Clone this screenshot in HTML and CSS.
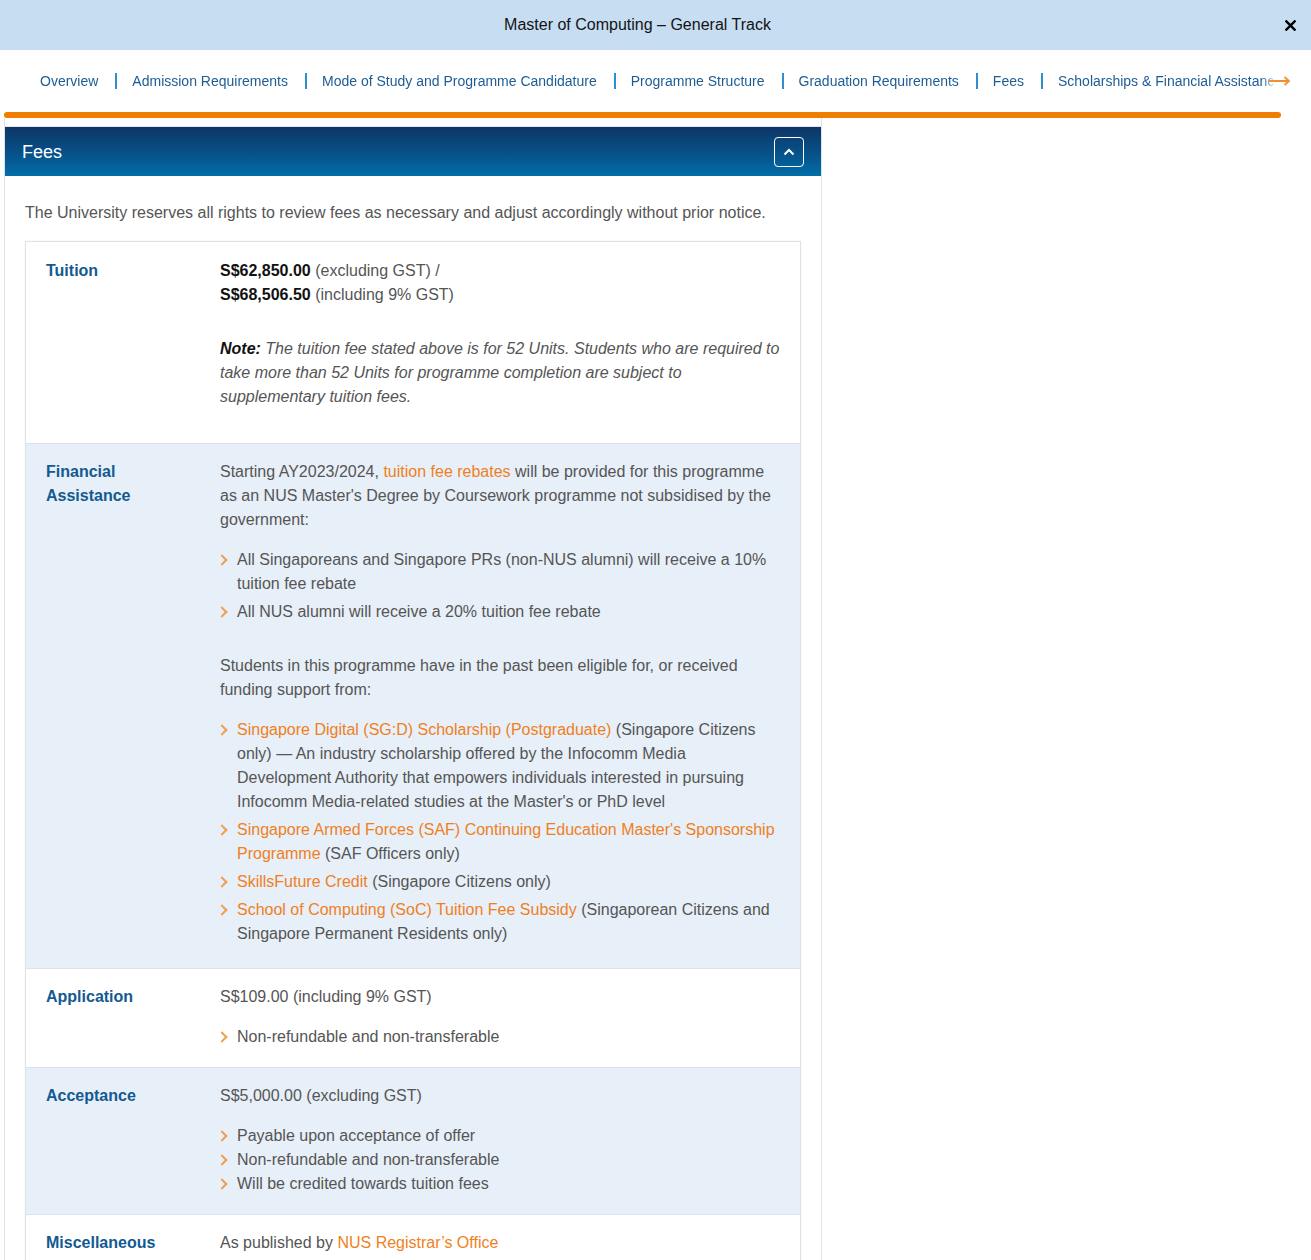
FILE: index.html
```html
<!DOCTYPE html>
<html lang="en">
<head>
<meta charset="utf-8">
<title>Master of Computing – General Track</title>
<link rel="stylesheet" href="styles.css">
</head>
<body>
<header class="topbar">
  <div class="topbar-title">Master of Computing – General Track</div>
  <button class="close-btn" aria-label="Close">
    <svg width="11" height="11" viewBox="0 0 12 12"><path d="M1.5 1.5 L10.5 10.5 M10.5 1.5 L1.5 10.5" stroke="#000" stroke-width="2.6" stroke-linecap="square"/></svg>
  </button>
</header>

<div class="page">
  <nav class="tabs">
    <div class="tabs-track">
      <a class="tab">Overview</a><span class="sep"></span>
      <a class="tab">Admission Requirements</a><span class="sep"></span>
      <a class="tab">Mode of Study and Programme Candidature</a><span class="sep"></span>
      <a class="tab">Programme Structure</a><span class="sep"></span>
      <a class="tab">Graduation Requirements</a><span class="sep"></span>
      <a class="tab">Fees</a><span class="sep"></span>
      <a class="tab">Scholarships &amp; Financial Assistance</a>
    </div>
    <span class="tabs-arrow">
      <svg width="22" height="10" viewBox="0 0 22 10"><path d="M0 5 H20 M15.5 1 L20 5 L15.5 9" fill="none" stroke="#f0902e" stroke-width="1.8"/></svg>
    </span>
  </nav>
  <div class="progress"></div>

  <section class="panel">
    <div class="panel-head">
      <h2 class="panel-title">Fees</h2>
      <button class="toggle" aria-label="Collapse">
        <svg width="12" height="8" viewBox="0 0 12 8"><path d="M1.5 6.5 L6 2 L10.5 6.5" fill="none" stroke="#fff" stroke-width="2"/></svg>
      </button>
    </div>
    <div class="panel-body">
      <p class="intro">The University reserves all rights to review fees as necessary and adjust accordingly without prior notice.</p>

      <div class="fees">
        <div class="row">
          <div class="label">Tuition</div>
          <div class="content">
            <p class="prices"><b>S$62,850.00</b> (excluding GST) /<br><b>S$68,506.50</b> (including 9% GST)</p>
            <p class="note"><b>Note:</b> The tuition fee stated above is for 52 Units. Students who are required to take more than 52 Units for programme completion are subject to supplementary tuition fees.</p>
          </div>
        </div>

        <div class="row alt">
          <div class="label">Financial Assistance</div>
          <div class="content">
            <p class="para">Starting AY2023/2024, <a class="link">tuition fee rebates</a> will be provided for this programme as an NUS Master's Degree by Coursework programme not subsidised by the government:</p>
            <ul class="list spaced gap-after">
              <li>All Singaporeans and Singapore PRs (non-NUS alumni) will receive a 10% tuition fee rebate</li>
              <li>All NUS alumni will receive a 20% tuition fee rebate</li>
            </ul>
            <p class="para">Students in this programme have in the past been eligible for, or received funding support from:</p>
            <ul class="list spaced">
              <li><a class="link">Singapore Digital (SG:D) Scholarship (Postgraduate)</a> (Singapore Citizens only) — An industry scholarship offered by the Infocomm Media Development Authority that empowers individuals interested in pursuing Infocomm Media-related studies at the Master's or PhD level</li>
              <li><a class="link">Singapore Armed Forces (SAF) Continuing Education Master's Sponsorship Programme</a> (SAF Officers only)</li>
              <li><a class="link">SkillsFuture Credit</a> (Singapore Citizens only)</li>
              <li><a class="link">School of Computing (SoC) Tuition Fee Subsidy</a> (Singaporean Citizens and Singapore Permanent Residents only)</li>
            </ul>
          </div>
        </div>

        <div class="row">
          <div class="label">Application</div>
          <div class="content">
            <p class="para">S$109.00 (including 9% GST)</p>
            <ul class="list">
              <li>Non-refundable and non-transferable</li>
            </ul>
          </div>
        </div>

        <div class="row alt">
          <div class="label">Acceptance</div>
          <div class="content">
            <p class="para">S$5,000.00 (excluding GST)</p>
            <ul class="list">
              <li>Payable upon acceptance of offer</li>
              <li>Non-refundable and non-transferable</li>
              <li>Will be credited towards tuition fees</li>
            </ul>
          </div>
        </div>

        <div class="row">
          <div class="label">Miscellaneous</div>
          <div class="content">
            <p class="para">As published by <a class="link">NUS Registrar’s Office</a></p>
            <p class="para">&nbsp;</p>
          </div>
        </div>
      </div>
    </div>
  </section>
</div>
</body>
</html>
```

FILE: styles.css
```css
* { box-sizing: border-box; }

html, body {
  margin: 0;
  padding: 0;
  background: #fff;
}

body {
  font-family: "Liberation Sans", Arial, sans-serif;
  color: #555;
  font-size: 16px;
  line-height: 24px;
}

/* Top bar */
.topbar {
  height: 50px;
  background: #c6ddf2;
  display: flex;
  align-items: center;
}

.topbar-title {
  flex: 1;
  text-align: center;
  font-size: 16px;
  color: #141414;
}

.close-btn {
  width: 36px;
  height: 50px;
  padding: 0 0 0 10px;
  border: 0;
  background: transparent;
  display: flex;
  align-items: center;
  justify-content: flex-start;
}

/* Page */
.page {
  padding: 0 30px 0 4px;
}

/* Tabs */
.tabs {
  position: relative;
  height: 62px;
  padding-left: 36px;
  display: flex;
  align-items: center;
}

.tabs-track {
  display: flex;
  align-items: center;
  white-space: nowrap;
  overflow: hidden;
  width: 1236px;
  -webkit-mask-image: linear-gradient(to right, #000 1222px, transparent 1236px);
  mask-image: linear-gradient(to right, #000 1222px, transparent 1236px);
}

.tab {
  font-size: 14px;
  color: #1e5d94;
  flex: none;
}

.sep {
  flex: none;
  width: 2px;
  height: 16px;
  background: #2b8fd0;
  margin: 0 15px 0 17px;
}

.tabs-arrow {
  position: absolute;
  left: 1265px;
  top: 26px;
  display: flex;
}

.progress {
  height: 6px;
  background: #ef7d00;
  border-radius: 3px;
  width: 1277px;
}

/* Panel */
.panel {
  width: 818px;
  border-left: 1px solid #dce3ea;
  border-right: 1px solid #dce3ea;
  padding-top: 8px;
}

.panel-head {
  height: 50px;
  border-top: 1px solid #dfe5ec;
  background: linear-gradient(to bottom, #0d3666 0%, #07528a 55%, #026ea8 100%);
  display: flex;
  align-items: center;
  justify-content: space-between;
  padding: 0 17px 0 17px;
}

.panel-title {
  margin: 0;
  font-size: 18px;
  font-weight: normal;
  color: #fff;
}

.toggle {
  width: 30px;
  height: 30px;
  border: 1.5px solid #fff;
  border-radius: 4px;
  background: transparent;
  padding: 0;
  display: flex;
  align-items: center;
  justify-content: center;
}

.panel-body {
  padding: 25px 20px 0 20px;
}

.intro {
  margin: 0 0 16px 0;
}

/* Fees table */
.fees {
  border: 1px solid #dfe2e6;
  box-shadow: 0 0 2px rgba(0, 0, 0, 0.06);
}

.row {
  display: flex;
  padding: 16px 20px 18px 20px;
  border-top: 1px solid #dde3ea;
}

.row:first-child {
  border-top: 0;
  padding-top: 17px;
}

.row.alt {
  background: #e7eff8;
}

.label {
  flex: none;
  width: 140px;
  margin-right: 34px;
  font-weight: bold;
  color: #135a91;
}

.content {
  flex: 1;
}

.content p {
  margin: 0;
}

.prices {
  margin-bottom: 30px !important;
}

.prices b {
  color: #111;
}

.note {
  font-style: italic;
  margin-bottom: 16px !important;
}

.note b {
  color: #111;
}

.para {
  margin-bottom: 16px !important;
}

.link {
  color: #f07f1d;
}

.list {
  list-style: none;
  margin: 0;
  padding: 0;
}

.list li {
  position: relative;
  padding-left: 17px;
}

.list.spaced li {
  margin-bottom: 4px;
}

.list.gap-after {
  margin-bottom: 30px;
}

.list li::before {
  content: "";
  position: absolute;
  left: -2px;
  top: 8px;
  width: 6px;
  height: 6px;
  border-right: 2px solid #f2a050;
  border-top: 2px solid #f2a050;
  transform: rotate(45deg);
}
```
